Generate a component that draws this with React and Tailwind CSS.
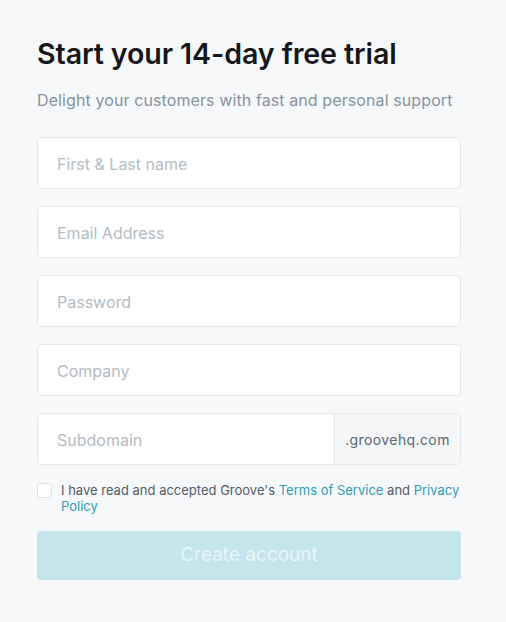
import { useState } from 'react'

const fields = ['First & Last name', 'Email Address', 'Password', 'Company']

export default function App() {
  const [agree, setAgree] = useState(false)

  return (
    <div className="min-h-screen w-full bg-[#f7f8fa] font-['Inter',sans-serif]">
      <div className="pl-[37px] pr-[45px] pt-[35px]">
        <h1 className="text-[28.6px] leading-[37px] font-semibold text-[#15171a] tracking-[-0.1px]">
          Start your 14-day free trial
        </h1>
        <p className="mt-[17px] text-[16px] leading-[22px] tracking-[0.1px] text-[#8593a0]">
          Delight your customers with fast and personal support
        </p>

        <form className="mt-[26px] flex flex-col gap-[17px]" onSubmit={e => e.preventDefault()}>
          {fields.map(f => (
            <input
              key={f}
              type={f === 'Password' ? 'password' : 'text'}
              placeholder={f}
              className="h-[52px] w-full rounded-[4px] border border-[#e4e8ec] bg-white px-[19px] pt-[1px] text-[16px] text-[#333] placeholder:text-[#b4bcc4] outline-none"
            />
          ))}

          <div className="flex h-[52px] w-full overflow-hidden rounded-[4px] border border-[#e4e8ec] bg-white">
            <input
              placeholder="Subdomain"
              className="min-w-0 flex-1 px-[19px] pt-[1px] text-[16px] text-[#333] placeholder:text-[#b4bcc4] outline-none"
            />
            <div className="flex w-[126px] items-center justify-center border-l border-[#e4e8ec] bg-[#f5f6f8] text-[14px] tracking-[0.4px] text-[#5b6670]">
              .groovehq.com
            </div>
          </div>

          <label className="flex items-start gap-[9px] text-[13px] leading-[16px] text-[#525c66]">
            <input
              type="checkbox"
              checked={agree}
              onChange={e => setAgree(e.target.checked)}
              className="mt-[1px] h-[15px] w-[15px] shrink-0 appearance-none rounded-[3px] border border-[#dde2e6] bg-white checked:bg-[#2aa8c0]"
            />
            <span>
              I have read and accepted Groove's{' '}
              <a href="#" className="text-[#2c9db5]">Terms of Service</a> and{' '}
              <a href="#" className="text-[#2c9db5]">Privacy</a>{' '}
              <a href="#" className="text-[#2c9db5]">Policy</a>
            </span>
          </label>

          <button
            type="submit"
            disabled={!agree}
            className="h-[49px] w-full rounded-[4px] bg-[#c4e5ec] text-[19px] text-[#e9f6f9] disabled:cursor-default"
          >
            Create account
          </button>
        </form>
      </div>
    </div>
  )
}
